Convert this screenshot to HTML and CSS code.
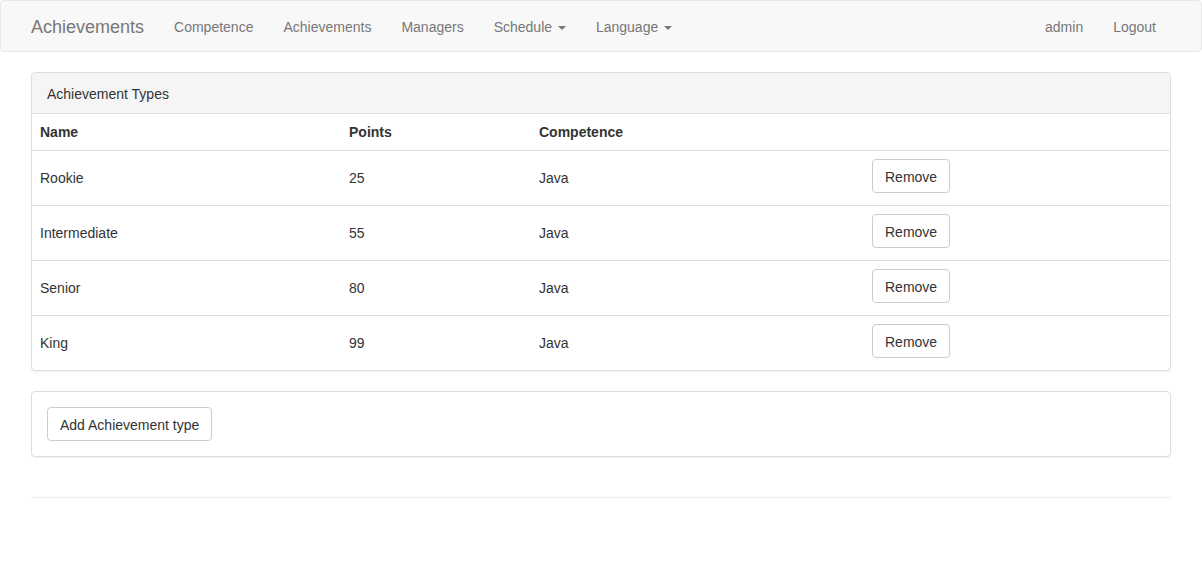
FILE: index.html
```html
<!DOCTYPE html>
<html>
<head>
<meta charset="utf-8">
<title>Achievements</title>
<link rel="stylesheet" href="styles.css">
</head>
<body>
<nav class="navbar">
  <div class="container nav-inner">
    <a class="brand" href="#">Achievements</a>
    <ul class="nav">
      <li><a href="#">Competence</a></li>
      <li><a href="#">Achievements</a></li>
      <li><a href="#">Managers</a></li>
      <li><a href="#">Schedule <span class="caret"></span></a></li>
      <li><a href="#">Language <span class="caret"></span></a></li>
    </ul>
    <ul class="nav nav-right">
      <li><a href="#">admin</a></li>
      <li><a href="#">Logout</a></li>
    </ul>
  </div>
</nav>
<div class="container">
  <div class="panel">
    <div class="panel-heading">Achievement Types</div>
    <table class="table">
      <colgroup>
        <col class="c-name"><col class="c-points"><col class="c-comp"><col>
      </colgroup>
      <tbody>
        <tr class="head-row"><th>Name</th><th>Points</th><th>Competence</th><th></th></tr>
        <tr><td>Rookie</td><td>25</td><td>Java</td><td class="act"><button class="btn">Remove</button></td></tr>
        <tr><td>Intermediate</td><td>55</td><td>Java</td><td class="act"><button class="btn">Remove</button></td></tr>
        <tr><td>Senior</td><td>80</td><td>Java</td><td class="act"><button class="btn">Remove</button></td></tr>
        <tr><td>King</td><td>99</td><td>Java</td><td class="act"><button class="btn">Remove</button></td></tr>
      </tbody>
    </table>
  </div>
  <div class="panel">
    <div class="panel-body">
      <button class="btn">Add Achievement type</button>
    </div>
  </div>
</div>
<div class="container">
  <hr class="rule">
</div>
</body>
</html>
```
FILE: styles.css
```css
* { box-sizing: border-box; }
html, body { margin: 0; padding: 0; }
body {
  font-family: "Liberation Sans", Helvetica, Arial, sans-serif;
  font-size: 14px;
  line-height: 20px;
  color: #333;
  background: #fff;
}
.container {
  width: 1170px;
  margin: 0 auto;
  padding: 0 15px;
}
.navbar {
  min-height: 52px;
  background: #f8f8f8;
  border: 1px solid #e7e7e7;
  border-radius: 4px;
  margin-bottom: 20px;
}
.nav-inner {
  display: flex;
  align-items: flex-start;
}
.brand {
  display: block;
  margin-left: -15px;
  padding: 16px 15px 14px;
  height: 50px;
  font-size: 18px;
  line-height: 20px;
  color: #777;
  text-decoration: none;
}
.nav {
  display: flex;
  list-style: none;
  margin: 0;
  padding: 0;
}
.nav a {
  display: block;
  padding: 16px 15px 14px;
  line-height: 20px;
  color: #777;
  text-decoration: none;
}
.nav-right {
  margin-left: auto;
  margin-right: 0;
}
.caret {
  display: inline-block;
  width: 0;
  height: 0;
  margin-left: 2px;
  vertical-align: middle;
  border-top: 4px solid #777;
  border-left: 4px solid transparent;
  border-right: 4px solid transparent;
}
.panel {
  background: #fff;
  border: 1px solid #ddd;
  border-radius: 4px;
  margin-bottom: 20px;
  box-shadow: 0 1px 1px rgba(0,0,0,.05);
}
.panel-heading {
  padding: 11px 15px 9px;
  background: #f5f5f5;
  border-bottom: 1px solid #ddd;
  border-radius: 3px 3px 0 0;
}
.panel-body {
  padding: 15px;
}
.table {
  width: 100%;
  border-collapse: collapse;
  border-spacing: 0;
  table-layout: fixed;
}
.c-name { width: 309px; }
.c-points { width: 190px; }
.c-comp { width: 333px; }
.table th, .table td {
  padding: 8px;
  text-align: left;
  vertical-align: middle;
  border-top: 1px solid #ddd;
}
.table th { font-weight: bold; }
.table .head-row th { border-top: 0; }
.table td.act { padding-bottom: 12px; }
.btn {
  display: block;
  font-family: inherit;
  font-size: 14px;
  line-height: 20px;
  color: #333;
  background: #fff;
  border: 1px solid #ccc;
  border-radius: 4px;
  padding: 7px 12px 5px;
  height: 34px;
  margin: 0;
  cursor: pointer;
}
.rule {
  margin: 40px 0 20px;
  border: 0;
  border-top: 1px solid #eee;
}
```
